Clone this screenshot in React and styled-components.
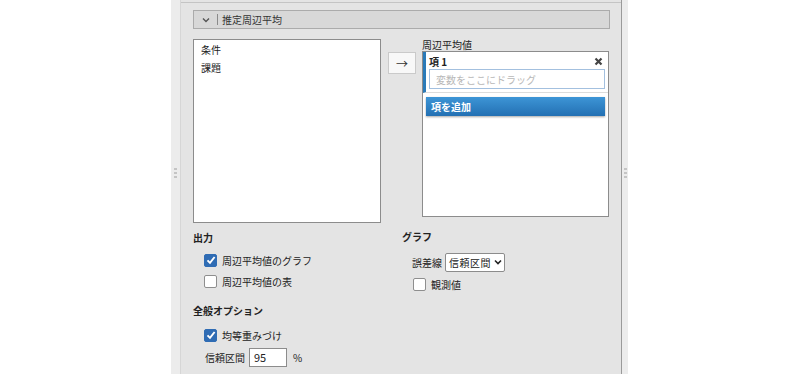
import React, { useState } from "react";
import styled, { createGlobalStyle } from "styled-components";

const GlobalStyle = createGlobalStyle`
  body {
    margin: 0;
    background: #ffffff;
    font-family: "Noto Sans CJK JP", "Noto Sans", sans-serif;
    font-size: 10px;
    color: #222;
  }
`;

const Styled = {
  Page: styled.div`
    display: flex;
    padding-left: 171px;
    height: 374px;
    overflow: hidden;
  `,
  Gutter: styled.div`
    width: ${(p) => p.$w}px;
    background: #ececec;
    display: flex;
    align-items: center;
    justify-content: center;
    padding-bottom: 28px;
  `,
  Grip: styled.div`
    display: flex;
    flex-direction: column;
    gap: 2px;
    span {
      width: 3px;
      height: 2px;
      background: #c4c4c4;
    }
  `,
  Panel: styled.div`
    width: 440px;
    background: #e4e4e4;
    border-left: 1px solid #d6d6d6;
    border-right: 1px solid #9a9a9a;
    padding-top: 2px;
  `,
  Section: styled.div`
    border-top: 1px solid #c4c4c4;
    padding: 7px 11px 0 12px;
  `,
  Header: styled.div`
    height: 17px;
    display: flex;
    align-items: center;
    background: #d8d8d8;
    border: 1px solid #ababab;
    color: #333;
  `,
  Chevron: styled.span`
    width: 23px;
    display: flex;
    justify-content: center;
    border-right: 1px solid #8a8a8a;
    height: 11px;
    align-items: center;
    margin-right: 4px;
  `,
  Top: styled.div`
    display: grid;
    grid-template-columns: 188px 28px 186px;
    column-gap: 7px;
    margin-top: 10px;
  `,
  ListBox: styled.div`
    height: 176px;
    background: #fff;
    border: 1px solid #8c8c8c;
    padding: 3px 7px;
    display: flex;
    flex-direction: column;
    gap: 4px;
  `,
  VarItem: styled.div`
    height: 14px;
    line-height: 14px;
  `,
  ArrowButton: styled.div`
    margin-top: 13px;
    height: 20px;
    background: #f8f8f8;
    border: 1px solid #cacaca;
    display: flex;
    align-items: center;
    justify-content: center;
    font-size: 12px;
    color: #333;
  `,
  Target: styled.div`
    display: flex;
    flex-direction: column;
    margin-left: -1px;
  `,
  TargetLabel: styled.div`
    height: 12px;
    line-height: 12px;
  `,
  TargetBox: styled.div`
    height: 164px;
    background: #fff;
    border: 1px solid #8c8c8c;
  `,
  Term: styled.div`
    border-left: 3px solid #2a7ab8;
    border-bottom: 1px solid #dcdcdc;
    padding: 1px 3px 3px 3px;
  `,
  TermHead: styled.div`
    display: flex;
    justify-content: space-between;
    align-items: center;
    height: 16px;
    font-weight: bold;
    padding-right: 2px;
  `,
  DropInput: styled.div`
    height: 18px;
    border: 1px solid #a3c0df;
    display: flex;
    align-items: center;
    padding-left: 6px;
    color: #b8b8b8;
  `,
  AddButton: styled.div`
    margin: 4px 3px 0 3px;
    height: 19px;
    display: flex;
    align-items: center;
    padding-left: 5px;
    color: #fff;
    font-weight: bold;
    background: linear-gradient(#3d95d6, #2370b3);
    box-shadow: 0 1px 2px rgba(0, 0, 0, 0.35);
  `,
  Bottom: styled.div`
    display: grid;
    grid-template-columns: 209px 1fr;
    margin-top: 8px;
  `,
  Column: styled.div`
    display: flex;
    flex-direction: column;
  `,
  GroupTitle: styled.div`
    font-weight: bold;
    height: 14px;
    line-height: 14px;
    margin-top: ${(p) => p.$mt || 0}px;
    margin-bottom: ${(p) => p.$mb}px;
  `,
  Row: styled.label`
    display: flex;
    align-items: center;
    gap: 5px;
    height: 14px;
    padding-left: ${(p) => p.$indent}px;
    margin-bottom: ${(p) => p.$mb}px;
  `,
  Box: styled.span`
    width: 13px;
    height: 13px;
    box-sizing: border-box;
    border-radius: 2px;
    display: flex;
    align-items: center;
    justify-content: center;
    background: ${(p) => (p.$on ? "#2f6cb4" : "#fff")};
    border: 1px solid ${(p) => (p.$on ? "#2f6cb4" : "#8e8e8e")};
  `,
  Select: styled.div`
    display: flex;
    align-items: center;
    gap: 3px;
    height: 17px;
    padding: 0 2px 0 3px;
    margin-left: -2px;
    background: #fff;
    border: 1px solid #8c8c8c;
    border-radius: 2px;
    font-size: 10px;
    letter-spacing: 0.5px;
  `,
  NumInput: styled.div`
    width: 32px;
    height: 17px;
    margin-left: -1px;
    background: #fff;
    border: 1px solid #8c8c8c;
    padding-left: 4px;
    display: flex;
    align-items: center;
    font-size: 11px;
  `,
};

const Check = ({ on, onClick }) => (
  <Styled.Box $on={on} onClick={onClick}>
    {on && (
      <svg width="10" height="10" viewBox="0 0 10 10">
        <path d="M1.5 5.3 L4 7.8 L8.6 2" stroke="#fff" strokeWidth="1.9" fill="none" />
      </svg>
    )}
  </Styled.Box>
);

const Grip = () => (
  <Styled.Grip>
    <span />
    <span />
    <span />
  </Styled.Grip>
);

const App = () => {
  const [graph, setGraph] = useState(true);
  const [table, setTable] = useState(false);
  const [equal, setEqual] = useState(true);
  const [observed, setObserved] = useState(false);

  return (
    <Styled.Page>
      <GlobalStyle />
      <Styled.Gutter $w={9}>
        <Grip />
      </Styled.Gutter>
      <Styled.Panel>
        <Styled.Section>
          <Styled.Header>
            <Styled.Chevron>
              <svg width="8" height="6" viewBox="0 0 8 6">
                <path d="M1 1.5 L4 4.5 L7 1.5" stroke="#555" strokeWidth="1.4" fill="none" />
              </svg>
            </Styled.Chevron>
            推定周辺平均
          </Styled.Header>

          <Styled.Top>
            <Styled.ListBox>
              <Styled.VarItem>条件</Styled.VarItem>
              <Styled.VarItem>課題</Styled.VarItem>
            </Styled.ListBox>
            <div>
              <Styled.ArrowButton>→</Styled.ArrowButton>
            </div>
            <Styled.Target>
              <Styled.TargetLabel>周辺平均値</Styled.TargetLabel>
              <Styled.TargetBox>
                <Styled.Term>
                  <Styled.TermHead>
                    項 1
                    <svg width="9" height="9" viewBox="0 0 9 9">
                      <path d="M1.5 1.5 L7.5 7.5 M7.5 1.5 L1.5 7.5" stroke="#444" strokeWidth="2.2" />
                    </svg>
                  </Styled.TermHead>
                  <Styled.DropInput>変数をここにドラッグ</Styled.DropInput>
                </Styled.Term>
                <Styled.AddButton>項を追加</Styled.AddButton>
              </Styled.TargetBox>
            </Styled.Target>
          </Styled.Top>

          <Styled.Bottom>
            <Styled.Column>
              <Styled.GroupTitle $mb={8}>出力</Styled.GroupTitle>
              <Styled.Row $indent={11} $mb={7}>
                <Check on={graph} onClick={() => setGraph(!graph)} />
                周辺平均値のグラフ
              </Styled.Row>
              <Styled.Row $indent={11} $mb={16}>
                <Check on={table} onClick={() => setTable(!table)} />
                周辺平均値の表
              </Styled.Row>
              <Styled.GroupTitle $mb={10}>全般オプション</Styled.GroupTitle>
              <Styled.Row $indent={11} $mb={8}>
                <Check on={equal} onClick={() => setEqual(!equal)} />
                均等重みづけ
              </Styled.Row>
              <Styled.Row $indent={12} $mb={0} as="div">
                信頼区間
                <Styled.NumInput>95</Styled.NumInput>
                <span style={{ marginLeft: 1 }}>%</span>
              </Styled.Row>
            </Styled.Column>
            <Styled.Column>
              <Styled.GroupTitle $mt={-1} $mb={11}>グラフ</Styled.GroupTitle>
              <Styled.Row $indent={10} $mb={8} as="div">
                誤差線
                <Styled.Select>
                  信頼区間
                  <svg width="8" height="6" viewBox="0 0 8 6">
                    <path d="M1 1.5 L4 4.5 L7 1.5" stroke="#222" strokeWidth="1.6" fill="none" />
                  </svg>
                </Styled.Select>
              </Styled.Row>
              <Styled.Row $indent={11} $mb={0}>
                <Check on={observed} onClick={() => setObserved(!observed)} />
                観測値
              </Styled.Row>
            </Styled.Column>
          </Styled.Bottom>
        </Styled.Section>
      </Styled.Panel>
      <Styled.Gutter $w={6}>
        <Grip />
      </Styled.Gutter>
    </Styled.Page>
  );
};

export default App;
